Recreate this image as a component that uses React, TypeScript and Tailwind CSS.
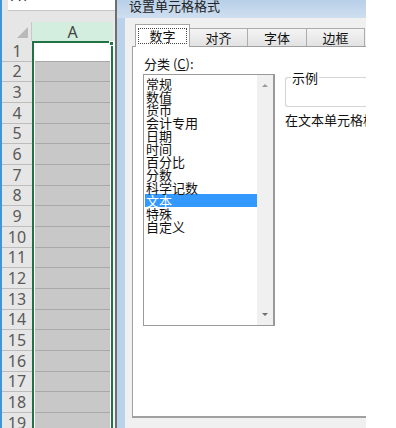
import React from "react";

const cjk = { fontFamily: '"Noto Sans CJK SC", "Noto Sans", sans-serif' };

const rows = Array.from({ length: 19 }, (_, i) => i + 1);
const categories = ["常规", "数值", "货币", "会计专用", "日期", "时间", "百分比", "分数", "科学记数", "文本", "特殊", "自定义"];
const tabs = [
  { label: "数字", w: "w-[55px]" },
  { label: "对齐", w: "w-[58px]" },
  { label: "字体", w: "w-[59px]" },
  { label: "边框", w: "w-[58px]" },
];

function Sheet() {
  return (
    <div className="flex h-full w-[115px] shrink-0">
      <div className="w-[2px] h-full bg-[#3d97d6]" />
      <div className="flex-1 flex flex-col bg-[#e6e6e6]">
        {/* name box strip */}
        <div className="h-[22px] pl-[6px]">
          <div className="h-[11px] bg-white border-b border-[#c6c6c6] overflow-hidden pl-[3px]">
            <div className="text-[15px] leading-[15px] -mt-[12px] text-[#333]" style={{ fontFamily: '"Noto Sans", sans-serif' }}>A1</div>
          </div>
        </div>
        {/* header row */}
        <div className="flex h-[19px]">
          <div className="w-[30px] relative border-r border-[#c8c8c8]">
            <div className="absolute right-[3px] bottom-[3px] w-0 h-0 border-l-[11px] border-l-transparent border-b-[11px] border-b-[#b9b9b9]" />
          </div>
          <div className="w-[81px] bg-[#d3eedf] flex items-center justify-center text-[16px] text-[#444]" style={{ fontFamily: '"Noto Sans", sans-serif' }}>
            A
          </div>
          <div className="flex-1 bg-[#eaeaea]" />
        </div>
        {/* body */}
        <div className="flex flex-1 overflow-hidden">
          <div className="w-[30px] flex flex-col">
            {rows.map((r) => (
              <div
                key={r}
                className="h-[20.67px] shrink-0 border-b border-[#bdbdbd] flex items-center justify-center text-[16px] leading-none text-[#5a5a5a]"
                style={{ fontFamily: '"Noto Sans", sans-serif' }}
              >
                {r}
              </div>
            ))}
          </div>
          <div className="relative w-[81px] border-l-2 border-r-2 border-t-2 border-[#217346] bg-white px-[1px] flex flex-col">
            {rows.map((r) => (
              <div
                key={r}
                className={`${r === 1 ? "h-[18.67px] bg-white" : "h-[20.67px] bg-[#c8c8c8]"} shrink-0 border-b border-[#a8a8a8]`}
              />
            ))}
            <div className="absolute -top-[2px] -right-[3px] w-[5px] h-[5px] bg-[#217346] border border-white" />
          </div>
          <div className="flex-1 bg-[#f4f4f4]" />
        </div>
      </div>
    </div>
  );
}

function Dialog() {
  return (
    <div className="w-[251px] shrink-0 h-full flex flex-col border-l-2 border-[#6e6e6e]" style={cjk}>
      <div className="h-[18px] shrink-0 bg-gradient-to-b from-[#b8cfe8] to-[#cfdff0] overflow-hidden pl-[12px]">
        <div className="text-[13px] leading-[13px] -mt-[1px] text-[#222]">设置单元格格式</div>
      </div>
      <div className="flex flex-1 min-h-0">
        <div className="w-[8px] shrink-0 bg-[#bad2ea]" />
        <div className="flex-1 min-w-0 bg-[#f0f0f0] flex flex-col pl-[7px]">
          {/* tabs */}
          <div className="flex items-end h-[28px] pl-[3px] relative z-10">
            {tabs.map((t, i) =>
              i === 0 ? (
                <div key={t.label} className={`${t.w} shrink-0 h-[23px] bg-white border border-b-0 border-[#a6a6a6] px-[2px] pt-[3px] -mb-[1px]`}>
                  <div className="h-[16px] border border-dotted border-[#444] flex items-center justify-center text-[13px] text-[#111]">
                    {t.label}
                  </div>
                </div>
              ) : (
                <div
                  key={t.label}
                  className={`${t.w} shrink-0 h-[18px] bg-gradient-to-b from-[#f4f4f4] to-[#e2e2e2] border border-l-0 border-b-0 border-[#acacac] flex items-center justify-center text-[13px] text-[#111]`}
                >
                  {t.label}
                </div>
              )
            )}
          </div>
          {/* panel */}
          <div className="h-[372px] shrink-0 bg-white border-l border-t border-b-2 border-[#a0a0a0] pl-[10px] flex gap-[10px] overflow-hidden">
            <div className="w-[132px] shrink-0 pt-[9px]">
              <div className="text-[13px] leading-[16px] pl-[1px] text-[#111]">
                分类 (<span className="underline">C</span>):
              </div>
              <div className="mt-[2px] h-[252px] border border-r-2 border-[#9a9a9a] flex">
                <div className="flex-1 pt-[2px] pl-[1px]">
                  {categories.map((c) => (
                    <div
                      key={c}
                      className={`h-[13px] text-[13px] leading-[13px] pl-[1px] whitespace-nowrap ${
                        c === "文本" ? "bg-[#3399ff] text-white" : "text-[#111]"
                      }`}
                    >
                      {c}
                    </div>
                  ))}
                </div>
                <div className="w-[16px] bg-[#f0f0f0] flex flex-col items-center justify-between py-[9px]">
                  <div className="w-0 h-0 border-x-[3px] border-x-transparent border-b-[3px] border-b-[#9a9a9a]" />
                  <div className="w-0 h-0 border-x-[3px] border-x-transparent border-t-[3px] border-t-[#6e6e6e]" />
                </div>
              </div>
            </div>
            <div className="flex-1 min-w-0 pt-[24px] overflow-hidden">
              <fieldset className="h-[36px] border border-r-0 border-[#d4d4d4] rounded-l-[3px] pl-[5px]">
                <legend className="px-[1px] text-[13px] leading-[13px] text-[#111]">示例</legend>
              </fieldset>
              <div className="mt-[6px] text-[13px] leading-[14px] whitespace-nowrap text-[#111]">在文本单元格格式中，数字作为文本处理。</div>
            </div>
          </div>
          <div className="flex-1" />
        </div>
      </div>
    </div>
  );
}

export default function App() {
  return (
    <div className="w-[396px] h-[428px] flex overflow-hidden bg-white">
      <Sheet />
      <Dialog />
      <div className="flex-1 bg-white" />
    </div>
  );
}
